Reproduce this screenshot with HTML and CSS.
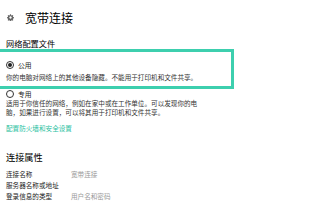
FILE: index.html
```html
<!DOCTYPE html>
<html lang="zh-CN">
<head>
<meta charset="utf-8">
<title>宽带连接</title>
<link rel="stylesheet" href="styles.css">
</head>
<body>
<div class="page">
  <div class="header">
    <svg class="gear" width="7" height="7" viewBox="0 0 14 14">
      <path fill="#666" fill-rule="evenodd" d="M6 0.5h2l0.4 1.8 1.3 0.6 1.6-1 1.4 1.4-1 1.6 0.6 1.3 1.8 0.4v2l-1.8 0.4-0.6 1.3 1 1.6-1.4 1.4-1.6-1-1.3 0.6-0.4 1.8h-2l-0.4-1.8-1.3-0.6-1.6 1-1.4-1.4 1-1.6-0.6-1.3-1.8-0.4v-2l1.8-0.4 0.6-1.3-1-1.6 1.4-1.4 1.6 1 1.3-0.6z M7 4.6a2.4 2.4 0 1 0 0.001 0z"/>
    </svg>
    <span class="title">宽带连接</span>
  </div>

  <div class="section-title">网络配置文件</div>

  <div class="box">
    <div class="radio-row">
      <span class="radio checked"></span>
      <span class="label">公用</span>
    </div>
    <div class="desc desc-box">你的电脑对网络上的其他设备隐藏。不能用于打印机和文件共享。</div>
  </div>

  <div class="radio-row">
    <span class="radio"></span>
    <span class="label">专用</span>
  </div>
  <div class="desc desc-wrap">适用于你信任的网络，例如在家中或在工作单位。可以发现你的电脑，如果进行设置，可以将其用于打印机和文件共享。</div>

  <div class="link">配置防火墙和安全设置</div>

  <div class="section-title section-title-2">连接属性</div>

  <div class="props">
    <div class="prop-name">连接名称</div><div class="prop-value">宽带连接</div>
    <div class="prop-name">服务器名称或地址</div><div class="prop-value"></div>
    <div class="prop-name">登录信息的类型</div><div class="prop-value">用户名和密码</div>
  </div>
</div>
</body>
</html>
```

FILE: styles.css
```css
html, body {
  margin: 0;
  padding: 0;
  background: #ffffff;
}

body {
  font-family: "Noto Sans CJK SC", "Noto Sans", sans-serif;
  color: #1a1a1a;
  overflow: hidden;
}

.page {
  padding-left: 6px;
  width: 322px;
}

.header {
  display: flex;
  align-items: center;
  height: 34px;
  padding-left: 1px;
  gap: 11px;
}

.gear {
  display: block;
  flex: none;
}

.title {
  font-size: 12px;
  line-height: 14px;
  color: #000;
  margin-top: 1px;
}

.section-title {
  margin-top: 4px;
  font-size: 8.2px;
  line-height: 10px;
  color: #000;
}

.box {
  margin-top: 1px;
  margin-left: -10px;
  width: 238px;
  box-sizing: border-box;
  border: 3px solid #3dcfae;
  padding: 8px 0 4px 7px;
}

.radio-row {
  display: flex;
  align-items: center;
  height: 10px;
  gap: 4px;
}

.radio {
  width: 8px;
  height: 8px;
  box-sizing: border-box;
  border: 1px solid #333;
  border-radius: 50%;
  display: flex;
  align-items: center;
  justify-content: center;
  flex: none;
}

.radio.checked::after {
  content: "";
  width: 4px;
  height: 4px;
  border-radius: 50%;
  background: #222;
}

.label {
  font-size: 6.8px;
  line-height: 10px;
  color: #222;
}

.desc {
  font-size: 6.6px;
  color: #333;
}

.desc-box {
  margin-top: 2px;
  line-height: 10px;
  white-space: nowrap;
}

.desc-wrap {
  width: 197px;
  line-height: 8.5px;
}

.link {
  margin-top: 7.5px;
  font-size: 6.6px;
  line-height: 9px;
  color: #2bbf9f;
}

.section-title-2 {
  margin-top: 18px;
  font-size: 9.2px;
  line-height: 12px;
}

.props {
  margin-top: 6.5px;
  display: grid;
  grid-template-columns: 65px 1fr;
  grid-auto-rows: 11px;
  font-size: 6.6px;
  line-height: 11px;
}

.prop-name {
  color: #222;
  white-space: nowrap;
}

.prop-value {
  color: #999;
}
```
